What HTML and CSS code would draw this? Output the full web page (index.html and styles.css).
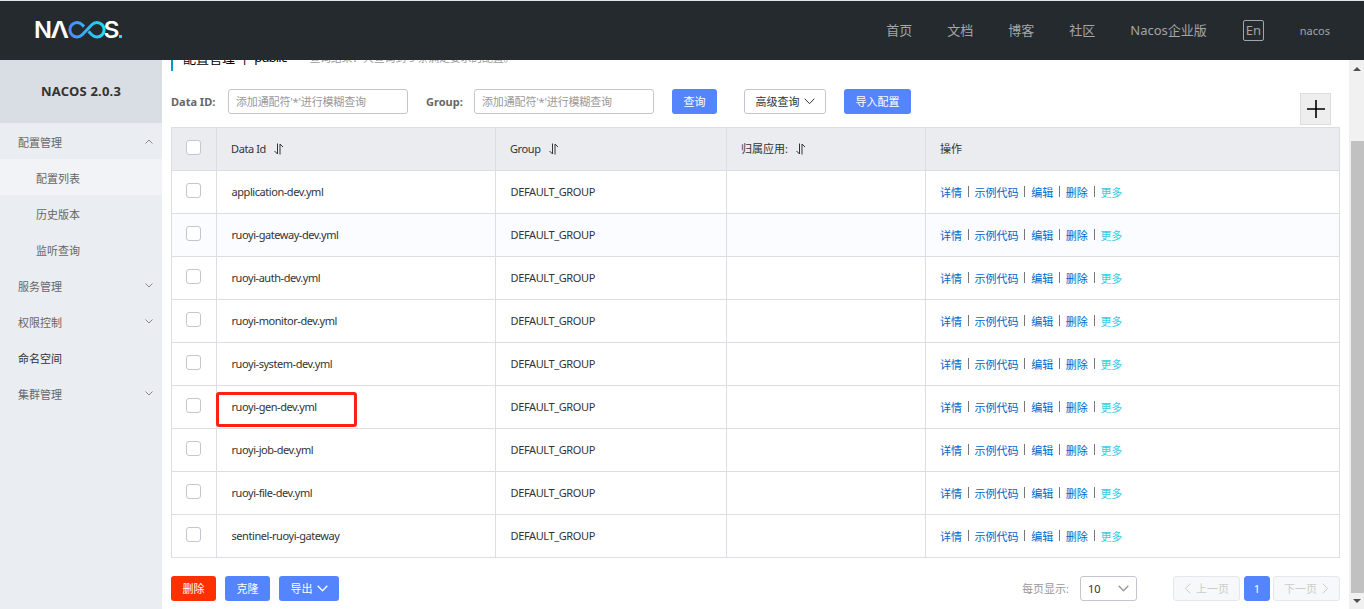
FILE: index.html
```
<!DOCTYPE html>
<html lang="zh-CN">
<head>
  <meta charset="UTF-8">
  <meta name="viewport" content="width=device-width, initial-scale=1">
  <title>Nacos</title>
  <link rel="stylesheet" href="styles.css">
</head>
<body>

  <header>
    <a class="logo" href="#">
      <svg width="94" height="40" viewBox="-4 -8 94 40">
        <defs>
          <linearGradient id="loop" gradientUnits="userSpaceOnUse" x1="33" y1="0" x2="69" y2="0">
            <stop offset="0" stop-color="#4a8bff"/>
            <stop offset="1" stop-color="#1ae0ee"/>
          </linearGradient>
        </defs>
        <text class="logo-text" x="-2" y="20" textLength="18" lengthAdjust="spacingAndGlyphs">N</text>
        <text class="logo-text" x="14.500" y="20" textLength="18.500" lengthAdjust="spacingAndGlyphs">Λ</text>
        <path d="M48 8.600L46.200 6.700A7.200 7.200 0 1 0 46.200 16.800L55.800 6.700A7.200 7.200 0 1 1 55.800 16.800L52.500 13.400"/>
        <text class="logo-text" x="67.500" y="20" textLength="16" lengthAdjust="spacingAndGlyphs">S</text>
        <rect x="83" y="17" width="3" height="3" fill="#1ae0ee"/>
      </svg>
    </a>
    <nav>
      <a href="#">首页</a>
      <a href="#">文档</a>
      <a href="#">博客</a>
      <a href="#">社区</a>
      <a href="#">Nacos企业版</a>
      <span class="lang">En</span>
      <span class="user">nacos</span>
    </nav>
  </header>

  <div class="page">
    <aside>
      <h1>NACOS 2.0.3</h1>
      <ul class="menu">
        <li>配置管理<svg class="arrow" viewBox="0 0 8 5"><path d="M.5 4.500 4 1l3.500 3.500"/></svg></li>
        <li class="sub active">配置列表</li>
        <li class="sub">历史版本</li>
        <li class="sub">监听查询</li>
        <li>服务管理<svg class="arrow" viewBox="0 0 8 5"><path d="M.5.5 4 4 7.500.5"/></svg></li>
        <li>权限控制<svg class="arrow" viewBox="0 0 8 5"><path d="M.5.5 4 4 7.500.5"/></svg></li>
        <li class="dark">命名空间</li>
        <li>集群管理<svg class="arrow" viewBox="0 0 8 5"><path d="M.5.5 4 4 7.500.5"/></svg></li>
      </ul>
    </aside>

    <main>
      <div class="title">
        <span class="name">配置管理</span>
        <span class="sep">|</span>
        <span class="space">public</span>
        <span class="result">查询结果：共查询到 9 条满足要求的配置。</span>
      </div>

      <form class="search">
        <label for="dataId">Data ID:</label>
        <input type="text" id="dataId" placeholder="添加通配符'*'进行模糊查询">
        <label class="group-label" for="group">Group:</label>
        <input type="text" id="group" placeholder="添加通配符'*'进行模糊查询">
        <button type="button" class="btn primary query">查询</button>
        <button type="button" class="btn advanced">高级查询<svg class="chevron" viewBox="0 0 11 7"><path d="M.7.7l4.800 5 4.800-5"/></svg></button>
        <button type="button" class="btn primary import">导入配置</button>
        <button type="button" class="add"><svg width="18" height="18"><path d="M9 0v18M0 9h18"/></svg></button>
      </form>

      <table>
        <colgroup>
          <col class="c-check"><col class="c-id"><col class="c-group"><col class="c-app"><col>
        </colgroup>
        <thead>
          <tr>
            <th><span class="checkbox"></span></th>
            <th><span class="latin">Data Id</span><svg class="sort" viewBox="0 0 10 12"><path d="M3.500.5v10.500L.5 8M6 11.500V1l3 3"/></svg></th>
            <th><span class="latin">Group</span><svg class="sort" viewBox="0 0 10 12"><path d="M3.500.5v10.500L.5 8M6 11.500V1l3 3"/></svg></th>
            <th>归属应用:<svg class="sort" viewBox="0 0 10 12"><path d="M3.500.5v10.500L.5 8M6 11.500V1l3 3"/></svg></th>
            <th>操作</th>
          </tr>
        </thead>
        <tbody id="rows"></tbody>
      </table>

      <div class="bottom">
        <button class="btn danger">删除</button>
        <button class="btn primary">克隆</button>
        <button class="btn primary export">导出<svg class="chevron" viewBox="0 0 11 7"><path d="M.7.7l4.800 5 4.800-5"/></svg></button>
        <div class="pager">
          <span class="size-label">每页显示:</span>
          <span class="select">10<svg class="chevron" viewBox="0 0 11 7"><path d="M.7.7l4.800 5 4.800-5"/></svg></span>
          <span class="page-btn prev"><svg viewBox="0 0 7 11"><path d="M6.300.7l-5 4.800 5 4.800"/></svg>上一页</span>
          <span class="page-btn current">1</span>
          <span class="page-btn next">下一页<svg viewBox="0 0 7 11"><path d="M.7.7l5 4.800-5 4.800"/></svg></span>
        </div>
      </div>
    </main>

    <div class="scrollbar">
      <i class="up"></i>
      <div class="thumb"></div>
      <i class="down"></i>
    </div>
  </div>

  <script>
    const configs = [
      'application-dev.yml',
      'ruoyi-gateway-dev.yml',
      'ruoyi-auth-dev.yml',
      'ruoyi-monitor-dev.yml',
      'ruoyi-system-dev.yml',
      'ruoyi-gen-dev.yml',
      'ruoyi-job-dev.yml',
      'ruoyi-file-dev.yml',
      'sentinel-ruoyi-gateway'
    ];
    const marked = 'ruoyi-gen-dev.yml';

    document.getElementById('rows').innerHTML = configs.map(id => `
      <tr>
        <td><span class="checkbox"></span></td>
        <td class="id">${id}${id === marked ? '<i class="mark"></i>' : ''}</td>
        <td class="group">DEFAULT_GROUP</td>
        <td></td>
        <td>
          <div class="actions">
            <a href="#">详情</a><i></i><a href="#">示例代码</a><i></i><a href="#">编辑</a><i></i><a href="#">删除</a><i></i><a href="#" class="more">更多</a>
          </div>
        </td>
      </tr>
    `).join('');
  </script>
</body>
</html>
```
FILE: styles.css
```
* {
  box-sizing: border-box;
}
body {
  margin: 0;
  height: 609px;
  overflow: hidden;
  font-family: 'Noto Sans', 'Noto Sans CJK SC', sans-serif;
  font-size: 11px;
  color: #333;
  background: #fff;
}
a {
  text-decoration: none;
}
svg path {
  fill: none;
  stroke: currentColor;
}
header {
  position: relative;
  z-index: 2;
  height: 60px;
  border-top: 1px solid #dfe6e4;
  background: #252a2f;
  display: flex;
  justify-content: space-between;
  align-items: center;
  padding: 0 34px 1px 32px;
}
.logo {
  display: flex;
}
.logo-text {
  font-family: Inter, sans-serif;
  font-size: 23px;
  font-weight: 600;
  fill: #fff;
}
.logo svg path {
  stroke: url(#loop);
  stroke-width: 3;
}
nav {
  display: flex;
  align-items: center;
  font-size: 13px;
  color: #a3a5a7;
}
nav a {
  position: relative;
  top: -1px;
  color: #a3a5a7;
  margin-right: 35px;
}
nav a:nth-child(5) {
  margin-right: 36px;
}
.lang {
  width: 21px;
  height: 21px;
  border: 1px solid #a3a5a7;
  border-radius: 2px;
  line-height: 19px;
  text-align: center;
  margin-right: 36px;
}
.user {
  font-size: 11px;
}

.page {
  display: flex;
  height: 549px;
}
aside {
  width: 162px;
  background: #eaedf1;
}
aside h1 {
  margin: 0;
  height: 63px;
  line-height: 63px;
  text-align: center;
  font-size: 13px;
  letter-spacing: .2px;
  background: #d9dde4;
}
.menu {
  list-style: none;
  margin: 0;
  padding: 0;
}
.menu li {
  display: flex;
  align-items: center;
  justify-content: space-between;
  height: 36px;
  padding: 1px 9px 0 18px;
  color: #666;
}
.menu .sub {
  padding-left: 36px;
}
.menu .active {
  background: #f2f3f7;
}
.menu .dark {
  color: #333;
}
.arrow {
  width: 8px;
  height: 5px;
  color: #888;
}

main {
  width: 1187px;
  padding: 0 9px;
}
.title {
  display: flex;
  align-items: center;
  height: 27px;
  margin-top: -16px;
  border-left: 2px solid #09c;
  padding: 0 0 1px 10px;
  font-size: 13px;
  color: #000;
}
.title .sep {
  margin: 0 6px;
}
.title .space {
  letter-spacing: -.8px;
}
.title .result {
  margin-left: 23px;
  font-size: 11px;
  letter-spacing: -.25px;
  color: #999;
}
.search {
  display: flex;
  align-items: center;
  margin: 18px 0 13px;
  height: 25px;
}
.search label {
  width: 57px;
  font-weight: bold;
  color: #666;
}
.search .group-label {
  width: 48px;
  margin-left: 18px;
}
.search input {
  width: 180px;
  height: 25px;
  padding: 0 7px;
  border: 1px solid #c4c6cf;
  border-radius: 3px;
  font: inherit;
  letter-spacing: -.15px;
  color: #333;
}
.search input::placeholder {
  color: #999;
}
.btn {
  display: flex;
  align-items: center;
  justify-content: center;
  width: 45px;
  height: 25px;
  padding: 0 0 1px;
  border: 1px solid transparent;
  border-radius: 3px;
  font: inherit;
  color: #fff;
}
.primary {
  background: #5584ff;
}
.danger {
  background: #ff3000;
}
.query {
  margin-left: 18px;
}
.advanced {
  width: 82px;
  margin: 0 18px 0 27px;
  padding-bottom: 2px;
  background: #fff;
  border-color: #c4c6cf;
  color: #333;
}
.import {
  width: 67px;
}
.chevron {
  width: 11px;
  height: 7px;
  margin-left: 5px;
}
.advanced .chevron {
  margin: 2px 0 0 4px;
}
.add {
  width: 31px;
  height: 32px;
  margin: 14px 9px 0 auto;
  padding: 0;
  display: flex;
  align-items: center;
  justify-content: center;
  background: #eee;
  border: 1px solid #ddd;
  color: #000;
}
.add path {
  stroke-width: 1.6;
}

table {
  width: 1169px;
  table-layout: fixed;
  border-collapse: collapse;
}
.c-check { width: 45px; }
.c-id { width: 279px; }
.c-group { width: 231px; }
.c-app { width: 199px; }
th, td {
  height: 43px;
  padding: 0 14px 2px;
  border: 1px solid #dcdee3;
  text-align: left;
  font-weight: normal;
}
th {
  background: #ebecf0;
}
tbody tr:nth-child(2) {
  background: #fafcff;
}
.checkbox {
  display: block;
  width: 15px;
  height: 15px;
  margin-top: -1px;
  border: 1px solid #c4c6cf;
  border-radius: 3px;
  background: #fff;
}
.latin {
  letter-spacing: -.4px;
}
.sort {
  width: 10px;
  height: 12px;
  margin-left: 8px;
  vertical-align: -2px;
}
.id {
  position: relative;
  padding-left: 14.5px;
  letter-spacing: -.44px;
}
.group {
  padding-left: 14.5px;
  letter-spacing: -.38px;
}
/* red frame over the highlighted config */
.mark {
  position: absolute;
  left: -1px;
  top: 6px;
  width: 141px;
  height: 35px;
  border: 3px solid #ff2214;
  border-radius: 3px;
}
.actions {
  display: flex;
  align-items: center;
  padding-top: 1px;
}
.actions a {
  color: #06c;
}
.actions .more {
  color: #33cde5;
}
.actions i {
  width: 1px;
  height: 11px;
  margin: 0 5.8px;
  background: #777;
}

.bottom {
  display: flex;
  align-items: center;
  margin-top: 18px;
}
.bottom .btn {
  margin-right: 9px;
}
.bottom .export {
  width: 60px;
}
.export .chevron {
  margin-left: 4px;
}
.bottom .chevron path {
  stroke-width: 1.3;
}
.pager {
  display: flex;
  margin-left: auto;
  line-height: 23px;
}
.size-label {
  margin-right: 11px;
  padding-top: 1px;
  color: #999;
}
.select {
  display: flex;
  align-items: center;
  justify-content: space-between;
  width: 57px;
  height: 25px;
  margin-right: 36px;
  padding: 0 7px;
  border: 1px solid #c4c6cf;
  border-radius: 3px;
}
.select .chevron {
  color: #999;
}
.page-btn {
  display: flex;
  align-items: center;
  justify-content: center;
  gap: 5px;
  width: 67px;
  height: 25px;
  padding-bottom: 1px;
  border: 1px solid #e6e7eb;
  border-radius: 3px;
  background: #f7f8fa;
  color: #ccc;
}
.page-btn svg {
  width: 7px;
  height: 11px;
}
.current {
  width: 26px;
  margin: 0 3px 0 4px;
  background: #5584ff;
  border-color: #5584ff;
  color: #fff;
}

.scrollbar {
  display: flex;
  flex-direction: column;
  align-items: center;
  width: 15px;
  background: #f1f1f1;
}
.thumb {
  width: 13px;
  height: 452px;
  margin: 70px 0 6px 2px;
  background: #c1c1c1;
}
.up, .down {
  border: 4px solid transparent;
}
.up {
  border-top: 0;
  border-bottom-color: #505050;
  margin-top: 7px;
}
.down {
  border-bottom: 0;
  border-top-color: #505050;
}
```
